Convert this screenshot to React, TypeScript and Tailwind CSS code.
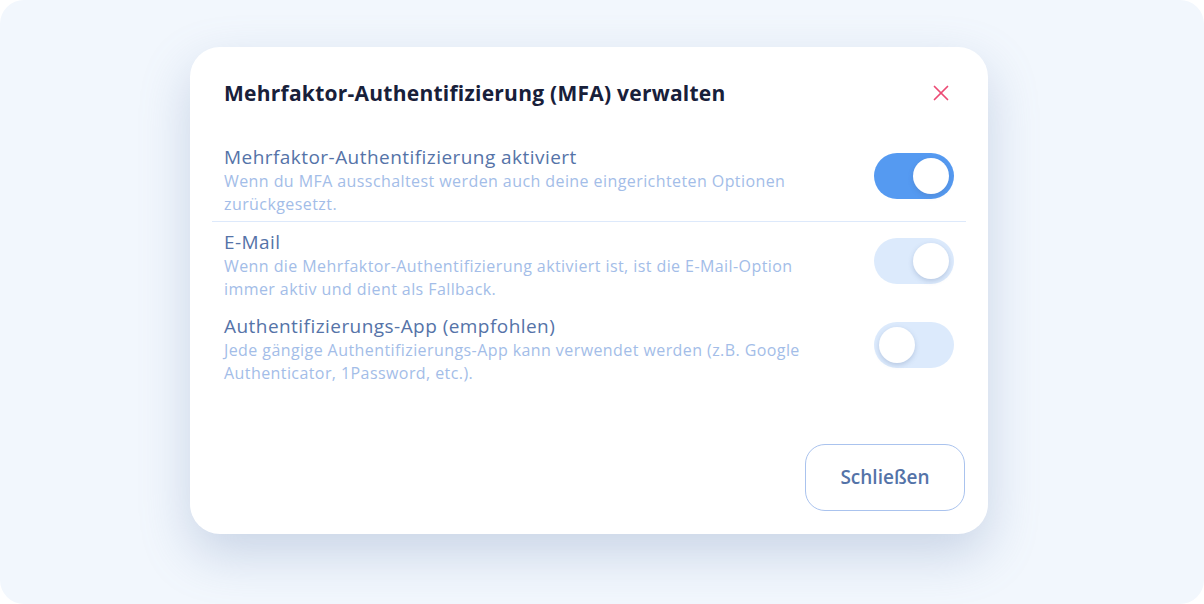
import { X } from "lucide-react";

interface Option {
  title: string;
  text: string;
  on: boolean;
  muted?: boolean;
  divider?: boolean;
}

const options: Option[] = [
  {
    title: "Mehrfaktor-Authentifizierung aktiviert",
    text: "Wenn du MFA ausschaltest werden auch deine eingerichteten Optionen zurückgesetzt.",
    on: true,
    divider: true,
  },
  {
    title: "E-Mail",
    text: "Wenn die Mehrfaktor-Authentifizierung aktiviert ist, ist die E-Mail-Option immer aktiv und dient als Fallback.",
    on: true,
    muted: true,
  },
  {
    title: "Authentifizierungs-App (empfohlen)",
    text: "Jede gängige Authentifizierungs-App kann verwendet werden (z.B. Google Authenticator, 1Password, etc.).",
    on: false,
  },
];

function Toggle({ on, muted }: { on: boolean; muted?: boolean }) {
  const track = on && !muted ? "bg-[#559af1]" : "bg-[#dceafc]";
  return (
    <span
      className={`mt-[8px] flex h-[46px] w-[80px] flex-shrink-0 items-center rounded-full p-[5px] ${track} ${
        on ? "justify-end" : "justify-start"
      }`}
    >
      <span className="h-[36px] w-[36px] rounded-full bg-white shadow-[0_2px_5px_rgba(70,100,150,0.25)]" />
    </span>
  );
}

function OptionRow({ option }: { option: Option }) {
  return (
    <>
      <div className="flex items-start justify-between">
        <div className="w-[600px]">
          <p className="text-[19px] leading-[24px] font-medium tracking-[0.45px] text-[#5573a8]">{option.title}</p>
          <p className="mt-[1px] text-[16px] leading-[23px] font-medium tracking-[0.42px] text-[#a3bde8]">
            {option.text}
          </p>
        </div>
        <Toggle on={option.on} muted={option.muted} />
      </div>
      {option.divider && <div className="-mx-[12px] mt-[5px] mb-[8px] border-t border-[#dde9fb]" />}
    </>
  );
}

export default function App() {
  return (
    <div className="h-[604px] w-[1204px] bg-white font-['Open_Sans',sans-serif]">
      <div className="flex h-full w-full rounded-[24px] bg-[#f2f7fd]">
        <div className="mt-[47px] ml-[190px] flex h-[487px] w-[798px] flex-col rounded-[30px] bg-white shadow-[0_20px_50px_rgba(115,140,185,0.32)]">
          {/* Header */}
          <div className="mt-[32px] flex h-[28px] items-center justify-between px-[34px]">
            <h2 className="text-[21px] leading-[28px] font-bold tracking-[0.25px] text-[#18203a]">
              Mehrfaktor-Authentifizierung (MFA) verwalten
            </h2>
            <X size={26} strokeWidth={1.6} className="text-[#ec4a74]" />
          </div>

          {/* Options */}
          <div className="mt-[38px] flex flex-col px-[34px]">
            {options.map((option, i) => (
              <div key={option.title} className={i === 2 ? "mt-[13px]" : ""}>
                <OptionRow option={option} />
              </div>
            ))}
          </div>

          {/* Footer */}
          <div className="mt-auto flex justify-end px-[23px] pb-[23px]">
            <button className="h-[67px] w-[160px] rounded-[20px] border border-[#aac3ee] text-[19px] font-semibold text-[#5473a8]">
              Schließen
            </button>
          </div>
        </div>
      </div>
    </div>
  );
}
